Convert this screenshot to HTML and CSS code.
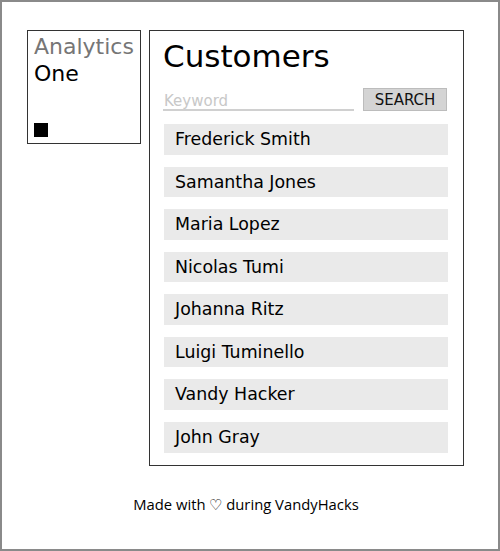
FILE: index.html
```html
<!DOCTYPE html>
<html lang="en">
<head>
  <meta charset="utf-8">
  <title>Analytics One - Customers</title>
  <link rel="stylesheet" href="styles.css">
</head>
<body>

<div class="layout">
  <div class="brand">
    <div class="brand-name">Analytics</div>
    <div class="brand-sub">One</div>
    <div class="brand-mark"></div>
  </div>

  <div class="panel">
    <h1>Customers</h1>
    <form class="search">
      <input type="text" class="keyword" placeholder="Keyword">
      <button type="button" class="search-btn">SEARCH</button>
    </form>
    <ul class="customers">
      <li>Frederick Smith</li>
      <li>Samantha Jones</li>
      <li>Maria Lopez</li>
      <li>Nicolas Tumi</li>
      <li>Johanna Ritz</li>
      <li>Luigi Tuminello</li>
      <li>Vandy Hacker</li>
      <li>John Gray</li>
    </ul>
  </div>
</div>

<p class="footer">Made with &#9825; during VandyHacks</p>

</body>
</html>
```

FILE: styles.css
```css
html, body {height: 100%;}
body {margin: 0; box-sizing: border-box; border: 2px solid #8a8a8a; background: #fff; color: #000; font-family: "DejaVu Sans", Verdana, sans-serif;}

.layout {display: flex; align-items: flex-start; gap: 8px; padding: 28px 0 0 25px;}

.brand {border: 1px solid #333; padding: 2px 6px 6px 6px; box-sizing: border-box; width: 114px; height: 114px; display: flex; flex-direction: column; font-size: 22px; line-height: 27px;}
.brand-name {color: #767676;}
.brand-sub {color: #000;}
.brand-mark {width: 14px; height: 14px; background: #000; margin-top: auto;}

.panel {width: 315px; height: 436px; box-sizing: border-box; border: 1px solid #333; padding: 7px 15px 0 14px;}
.panel h1 {margin: 0 0 0 -1px; font-size: 31px; font-weight: normal; line-height: 36px;}

.search {display: flex; align-items: flex-end; gap: 9px; margin-top: 12px;}
.keyword {width: 191px; height: 25px; box-sizing: border-box; border: 0; border-bottom: 2px solid #d0d0d0; padding: 7px 1px 0 1px; margin-left: -1px; font-family: "DejaVu Sans", Verdana, sans-serif; font-size: 15px; line-height: 16px; outline: none;}
.keyword::placeholder {color: #c8c8c8;}
.search-btn {width: 84px; height: 23px; box-sizing: border-box; border: 1px solid #bcbcbc; background: #d4d4d4; padding: 0; font-family: "DejaVu Sans", Verdana, sans-serif; font-size: 15px; color: #111;}

.customers {list-style: none; margin: 13px 0 0 0; padding: 0;}
.customers li {height: 30.57px; box-sizing: border-box; margin-bottom: 12px; background: #eaeaea; padding: 0 11px; font-size: 17.4px; line-height: 31px;}

.footer {margin: 28px 0 0 0; text-align: center; font-family: "Open Sans", "Noto Sans", sans-serif; font-size: 14.8px; padding-right: 8px;}
```
